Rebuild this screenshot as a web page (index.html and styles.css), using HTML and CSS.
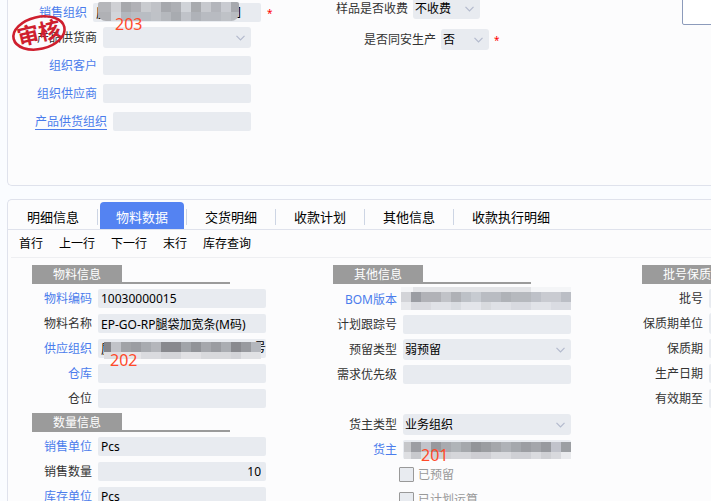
FILE: index.html
```html
<!DOCTYPE html>
<html lang="zh-CN">
<head>
<meta charset="utf-8">
<title>物料数据</title>
<link rel="stylesheet" href="styles.css">
</head>
<body>
<svg class="defs" aria-hidden="true"><symbol id="chevron" viewBox="0 0 9 6"><path d="M.5 .8 4.5 4.8 8.5 .8" fill="none" stroke="currentColor" stroke-width="1.2"/></symbol></svg>
<main>
  <section class="panel head-panel">
    <div class="stack">
      <div class="field first narrow"><label class="link" for="org">销售组织</label><span class="box"><input id="org" value="厦"><span class="mask mask-org"></span><span class="tail">]</span><span class="note">203</span></span><span class="star">*</span></div>
      <div class="field short"><label for="supplier">产品供货商</label><span class="box"><select id="supplier"><option></option></select><svg class="chev"><use href="#chevron"/></svg></span></div>
      <div class="field short"><label class="link" for="cust">组织客户</label><span class="box"><input id="cust"></span></div>
      <div class="field short"><label class="link" for="vend">组织供应商</label><span class="box"><input id="vend"></span></div>
      <div class="field wide"><label class="link underline" for="sorg">产品供货组织</label><span class="box"><input id="sorg"></span></div>
      <svg class="stamp" viewBox="0 0 60 40" role="img" aria-label="审核"><g transform="rotate(-13 30 20)"><ellipse cx="30" cy="20" rx="26" ry="16" fill="none" stroke="#cf1f2e" stroke-width="2.6"/><text x="30" y="28" text-anchor="middle">审核</text></g></svg>
    </div>
    <div class="stack options">
      <div class="field fee"><label for="fee">样品是否收费</label><span class="box"><select id="fee"><option>不收费</option></select><svg class="chev"><use href="#chevron"/></svg></span></div>
      <div class="field plant"><label for="plant">是否同安生产</label><span class="box"><select id="plant"><option>否</option></select><svg class="chev"><use href="#chevron"/></svg></span><span class="star">*</span></div>
    </div>
    <textarea aria-label="备注"></textarea>
  </section>

  <section class="panel">
    <nav class="tabs">
      <button>明细信息</button><button class="active">物料数据</button><button>交货明细</button><button>收款计划</button><button>其他信息</button><button>收款执行明细</button>
    </nav>
    <div class="toolbar">
      <button>首行</button><button>上一行</button><button>下一行</button><button>末行</button><button>库存查询</button>
    </div>
    <div class="columns">
      <div class="column material">
        <div class="title"><h2>物料信息</h2></div>
        <div class="field"><label class="link" for="code">物料编码</label><span class="box"><input id="code" value="10030000015"></span></div>
        <div class="field"><label for="name">物料名称</label><span class="box"><input id="name" value="EP-GO-RP腿袋加宽条(M码)"></span></div>
        <div class="field"><label class="link" for="sup">供应组织</label><span class="box"><input id="sup" value="厦"><span class="tail">号</span><span class="mask mask-sup"></span><span class="note">202</span></span></div>
        <div class="field"><label class="link" for="wh">仓库</label><span class="box"><input id="wh"></span></div>
        <div class="field"><label for="bin">仓位</label><span class="box"><input id="bin"></span></div>
        <div class="title"><h2>数量信息</h2></div>
        <div class="field"><label class="link" for="unit">销售单位</label><span class="box"><input id="unit" value="Pcs"></span></div>
        <div class="field"><label for="qty">销售数量</label><span class="box"><input id="qty" class="number" value="10"></span></div>
        <div class="field"><label class="link" for="sunit">库存单位</label><span class="box"><input id="sunit" value="Pcs"></span></div>
      </div>
      <div class="column other">
        <div class="title"><h2>其他信息</h2></div>
        <div class="field"><label class="link" for="bom">BOM版本</label><span class="box"><input id="bom"><span class="mask mask-bom"></span></span></div>
        <div class="field"><label for="track">计划跟踪号</label><span class="box"><input id="track"></span></div>
        <div class="field"><label for="rtype">预留类型</label><span class="box"><select id="rtype"><option>弱预留</option></select><svg class="chev"><use href="#chevron"/></svg></span></div>
        <div class="field"><label for="prio">需求优先级</label><span class="box"><input id="prio"></span></div>
        <div class="field"></div>
        <div class="field"><label for="otype">货主类型</label><span class="box"><select id="otype"><option>业务组织</option></select><svg class="chev"><use href="#chevron"/></svg></span></div>
        <div class="field"><label class="link" for="owner">货主</label><span class="box"><input id="owner"><span class="mask mask-owner"></span><span class="note">201</span></span></div>
        <div class="check"><input type="checkbox" id="reserved"><label for="reserved">已预留</label></div>
        <div class="check"><input type="checkbox" id="planned"><label for="planned">已计划运算</label></div>
      </div>
      <div class="column batch">
        <div class="title"><h2>批号保质期</h2></div>
        <div class="field"><label for="lot">批号</label><span class="box"><input id="lot"></span></div>
        <div class="field"><label for="lifeunit">保质期单位</label><span class="box"><select id="lifeunit"><option></option></select></span></div>
        <div class="field"><label for="life">保质期</label><span class="box"><input id="life"></span></div>
        <div class="field"><label for="made">生产日期</label><span class="box"><input id="made"></span></div>
        <div class="field"><label for="until">有效期至</label><span class="box"><input id="until"></span></div>
      </div>
    </div>
  </section>
</main>
</body>
</html>
```
FILE: styles.css
```css
* { box-sizing: border-box; }
html { overflow: hidden; }
body {
  margin: 0;
  height: 100vh;
  overflow: hidden;
  background: #fafcff;
  color: #333;
  font: 12px/16px "Noto Sans", "Noto Sans CJK SC", sans-serif;
}
button, input, select, textarea { font: inherit; color: #000; }
.defs { position: absolute; width: 0; height: 0; }
main { padding-left: 7px; }

.panel {
  background: #fcfcfd;
  border: 1px solid #dfe2ec;
  border-right: 0;
  border-radius: 5px 0 0 5px;
  overflow: hidden;
}
.head-panel {
  display: grid;
  grid-template-columns: 300px 374px 1fr;
  align-items: start;
  margin-bottom: 13px;
  padding-bottom: 50px;
  border-top: 0;
  border-radius: 0 0 0 5px;
}
.head-panel textarea {
  width: 160px;
  height: 35px;
  margin-top: -10px;
  border: 1px solid #8c9bbb;
  border-radius: 2px;
  background: #fff;
  resize: none;
}

/* Fields */
.stack { position: relative; display: grid; gap: 1px; padding-top: 2px; }
.field { --label: 84px; --input: 168px; display: flex; align-items: center; gap: 6px; height: 25px; }
.field label { width: var(--label); text-align: right; white-space: nowrap; }
.link { color: #4b7cec; }
.underline { text-decoration: underline; text-underline-offset: 3px; }
.box { position: relative; flex: none; width: var(--input); }
.box input, .box select {
  display: block;
  width: 100%;
  height: 19px;
  padding: 0 3px;
  border: 0;
  border-radius: 2px;
  background: #e8ebf0;
  appearance: none;
}
.box select { height: 21px; padding: 0 2px; border-radius: 3px; }
.box .number { padding-right: 5px; text-align: right; }
.chev { position: absolute; right: 6px; top: 8px; width: 9px; height: 6px; color: #b3bacd; }
.star { color: #f00; font-size: 10px; line-height: 12px; }

.stack .field { height: 27px; }
.stack .first { height: 21px; }
.stack .narrow { --label: 79px; }
.stack .short { --label: 89px; --input: 148px; }
.stack .wide { --label: 99px; --input: 138px; }
.options { gap: 7px; padding-top: 0; }
.options .fee { --label: 100px; --input: 67px; height: 17px; gap: 5px; }
.options .plant { --label: 128px; --input: 48px; height: 31px; gap: 5px; }

/* Tabs and toolbar */
.tabs { display: flex; padding: 2px 0 0 3px; height: 30px; border-bottom: 1px solid #dfe2ec; }
.tabs button {
  position: relative;
  margin-right: 5px;
  padding: 3px 16px 0;
  border: 0;
  border-radius: 4px 4px 0 0;
  background: none;
  font-size: 13px;
  white-space: nowrap;
}
.tabs button:not(:last-child)::after {
  content: "";
  position: absolute;
  right: -3px;
  top: 7px;
  width: 1px;
  height: 16px;
  background: #cdd5e4;
}
.tabs .active { background: #5483f2; color: #fff; }
.toolbar { display: flex; gap: 16px; height: 28px; margin-left: 3px; padding-left: 8px; border-bottom: 1px solid #eeeff2; }
.toolbar button { padding: 0; border: 0; background: none; white-space: nowrap; }

/* Detail columns */
.columns { display: grid; grid-template-columns: 301px 309px 300px; padding-top: 5px; }
.title { width: 198px; margin: 2px 0 2px 24px; border-bottom: 2px solid #9b9b9b; }
.title h2 {
  width: max-content;
  height: 17px;
  margin: 0;
  padding: 2px 21px 0;
  background: #9b9b9b;
  color: #fff;
  font-size: 12px;
  font-weight: 400;
}
.other .title { margin-bottom: 3px; }
.other .field { --label: 88px; }
.batch .field { --label: 85px; }
.check { display: flex; align-items: center; gap: 4px; height: 25px; padding-left: 90px; color: #999; }
.check input { appearance: none; width: 15px; height: 15px; margin: 0; border: 1px solid #999; border-radius: 1px; background: #e8ebf0; }

/* Overlays */
.note { position: absolute; z-index: 2; left: 12px; top: 11px; color: #ff4a2a; font-size: 16px; line-height: 20px; }
.mask-org ~ .note { left: 22px; }
.mask-owner ~ .note { left: 18px; top: 5px; }
.tail { position: absolute; right: 0; top: 1px; color: #000; }
.mask-org + .tail { right: 20px; }
.stamp { position: absolute; left: 1px; top: 13px; width: 60px; height: 40px; }
.stamp text { fill: #cf1f2e; font: 700 22px "Noto Sans CJK SC", sans-serif; }
.mask { position: absolute; z-index: 1; background-repeat: no-repeat; }
.mask-org {
  left: 5px; top: -1px; width: 141px; height: 19px; border-radius: 2px 2px 8px 8px;
  background-size: 100% 10px, 100% 9px;
  background-position: 0 0, 0 10px;
  background-image:
    linear-gradient(90deg, #b5b6ba 13px, #cfd0d4 0 23px, #a7a8ac 0 33px, #b1b1b6 0 43px, #c9cbcf 0 53px, #c0c2c7 0 63px, #a6a8ad 0 73px, #adafb4 0 83px, #d0d3d8 0 93px, #a8aaae 0 103px, #c7c9ce 0 113px, #b3b5bb 0 123px, #c9cbd1 0 133px, #a7a9ae 0),
    linear-gradient(90deg, #b0b1b5 13px, #d2d5da 0 23px, #b2b7bd 0 33px, #b9bdc3 0 53px, #bfc2c7 0 63px, #b5b8bd 0 73px, #a8abb0 0 83px, #c0c3c9 0 93px, #afb2b8 0 103px, #b8bbc1 0 123px, #bfc2c7 0 133px, #b8bbc0 0);
}
.mask-sup {
  left: 6px; top: 3px; width: 157px; height: 17px;
  background-size: 100% 10px, 100% 7px;
  background-position: 0 0, 0 10px;
  background-image:
    linear-gradient(90deg, #85868b 7px, #c1c3c8 0 17px, #a1a3a7 0 27px, #9b9da2 0 37px, #a8abb0 0 47px, #b4b6bb 0 57px, #88898e 0 77px, #a1a4a9 0 87px, #919398 0 97px, #a5a7ac 0 107px, #9a9ca1 0 117px, #aaadb2 0 127px, #898a8f 0 137px, #989a9f 0 147px, #b4b7bd 0),
    linear-gradient(90deg, #dedee1 17px, #e5e5e8 0 37px, #dadbdf 0 57px, #d4d5d9 0 77px, #e1e1e4 0 97px, #d8d9dc 0 127px, #d3d4d8 0 137px, #e0e1e4 0);
}
.mask-bom {
  left: -2px; top: -3px; width: 170px; height: 23px;
  background-size: 100% 5px, 100% 10px, 100% 8px;
  background-position: 0 0, 0 5px, 0 15px;
  background-image:
    linear-gradient(90deg, #f4f5f7 12px, #e3e4e7 0 130px, #f4f5f7 0),
    linear-gradient(90deg, #d3d4d8 10px, #9b9da3 0 20px, #b1b2b7 0 40px, #c1c3c8 0 50px, #afb1b6 0 60px, #bdc1c7 0 70px, #c7cbd1 0 80px, #b9bcc2 0 100px, #afb2b7 0 110px, #b6b9be 0 130px, #bec1c8 0 140px, #c9cbd1 0 160px, #bbbec5 0),
    linear-gradient(90deg, #e8e9ec 10px, #d9dadf 0 30px, #e0e2e7 0 50px, #d9dce1 0 60px, #e3e5ea 0 80px, #d8dade 0 90px, #dfe1e6 0 110px, #d8dae0 0 130px, #e1e3e8 0 150px, #dadce2 0);
}
.mask-owner {
  left: 1px; top: 2px; width: 167px; height: 17px;
  background-size: 100% 10px, 100% 7px;
  background-position: 0 0, 0 10px;
  background-image:
    linear-gradient(90deg, #c6c7ca 7px, #9d9ea3 0 17px, #c1c3ca 0 27px, #98999e 0 37px, #a8aaaf 0 47px, #b0b4b8 0 57px, #a5a8ac 0 67px, #939599 0 77px, #9b9da1 0 87px, #a5a7ab 0 97px, #afb2b7 0 107px, #a5a8ad 0 117px, #9c9ea3 0 127px, #a4a6ab 0 137px, #989a9f 0 147px, #c1c3cb 0 157px, #9c9fa3 0),
    linear-gradient(90deg, #dedfe2 7px, #c8c9cd 0 17px, #e0e1e4 0 27px, #d0d1d5 0 47px, #d5d6da 0 67px, #ceced3 0 87px, #d9dade 0 107px, #cfd0d5 0 127px, #dadbdf 0 137px, #cfd0d4 0 147px, #d8d9dd 0 157px, #e9eaed 0);
}
```
